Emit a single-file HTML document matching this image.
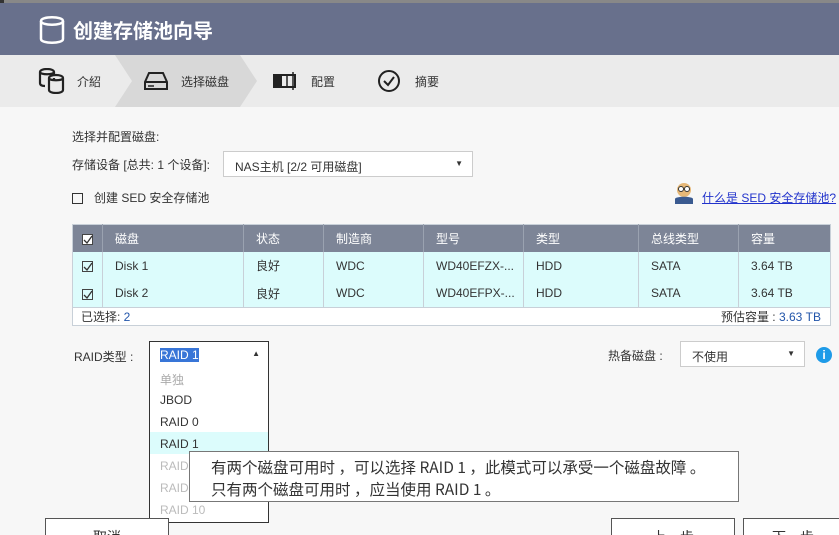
<!DOCTYPE html><html><head><meta charset="utf-8"><style>
*{margin:0;padding:0;box-sizing:border-box}
html,body{width:839px;height:535px;overflow:hidden}
body{background:#f7f7f7;font-family:"Liberation Sans","Noto Sans CJK SC",sans-serif;font-size:12px;color:#333;position:relative}
.a{position:absolute}
.hdr{left:0;top:3px;width:839px;height:52px;background:#68708c;color:#fff;font-size:20px;font-weight:bold}
.steps{left:0;top:55px;width:839px;height:52px;background:#ebebeb}
td,th{border-right:1px solid #c8d0d8;height:28px;text-align:left;padding-left:12px;font-weight:normal}
th{color:#fff;height:27px}
.cb{display:inline-block;width:11px;height:11px;border:1px solid #444;position:relative;vertical-align:middle}
.btn{background:#fff;border:1px solid #555;height:30px;text-align:center;font-size:14px;padding-top:8px}
</style></head><body>
<div class="a" style="left:0;top:0;width:839px;height:3px;background:#888"></div>
<div class="a" style="left:0;top:0;width:4px;height:55px;background:#333"></div>
<div class="a hdr">
<svg class="a" style="left:39px;top:12px" width="26" height="30" viewBox="0 0 26 30"><path d="M2 6c0-5 22-5 22 0v18c0 5-22 5-22 0z" fill="none" stroke="#fff" stroke-width="2.5"/><path d="M2 6c0 5 22 5 22 0" fill="none" stroke="#fff" stroke-width="2.5"/></svg>
<span class="a" style="left:73px;top:12px">创建存储池向导</span></div>
<div class="a steps">
<svg class="a" style="left:0;top:0" width="839" height="52"><polygon points="115,0 240,0 257,26 240,52 115,52 132,26" fill="#d8d8d8"/></svg>
<svg class="a" style="left:38px;top:13px" width="28" height="26" viewBox="0 0 28 26"><path d="M2 4c0-4 14-4 14 0v12c0 2-3 3-5 3" fill="none" stroke="#222" stroke-width="2.2"/><path d="M2 4c0 3 14 3 14 0M2 4v11c0 2 2 3 5 3" fill="none" stroke="#222" stroke-width="2.2"/><path d="M11 10c0-4 14-4 14 0v12c0 4-14 4-14 0z M11 10c0 3 14 3 14 0" fill="#ebebeb" stroke="#222" stroke-width="2.2"/></svg>
<span class="a" style="left:77px;top:18px">介紹</span>
<svg class="a" style="left:144px;top:16px" width="24" height="20" viewBox="0 0 24 20"><path d="M5 2h14l4 9v7H1v-7z" fill="none" stroke="#222" stroke-width="2"/><path d="M1 11h22" stroke="#222" stroke-width="2"/><path d="M4 15h6" stroke="#222" stroke-width="1.5"/></svg>
<span class="a" style="left:181px;top:18px">选择磁盘</span>
<svg class="a" style="left:273px;top:17px" width="26" height="18"><rect x="1" y="3" width="21" height="12" fill="none" stroke="#222" stroke-width="2"/><rect x="1" y="3" width="8" height="12" fill="#222"/><path d="M14 3v12M20 0v18" stroke="#222" stroke-width="1.5"/></svg>
<span class="a" style="left:311px;top:18px">配置</span>
<svg class="a" style="left:377px;top:14px" width="24" height="24"><circle cx="12" cy="12" r="10" fill="none" stroke="#222" stroke-width="2"/><path d="M7 12l4 4 6-8" fill="none" stroke="#222" stroke-width="2"/></svg>
<span class="a" style="left:415px;top:18px">摘要</span>
</div>
<div class="a" style="left:72px;top:128px">选择并配置磁盘:</div>
<div class="a" style="left:72px;top:156px">存储设备 [总共: 1 个设备]:</div>
<div class="a" style="left:223px;top:151px;width:250px;height:26px;background:#fff;border:1px solid #ccc;padding:6px 0 0 11px">NAS主机 [2/2 可用磁盘]<span class="a" style="right:9px;top:7px;font-size:8px">▼</span></div>
<span class="a cb" style="left:72px;top:191px;border-color:#333"></span>
<div class="a" style="left:94px;top:189px">创建 SED 安全存储池</div>
<svg class="a" style="left:672px;top:182px" width="24" height="22"><circle cx="12" cy="8" r="7" fill="#e6b878"/><circle cx="9" cy="7" r="2.5" fill="#fff" stroke="#333"/><circle cx="15" cy="7" r="2.5" fill="#fff" stroke="#333"/><path d="M3 22v-5c0-3 18-3 18 0v5z" fill="#3a5a90"/></svg>
<div class="a" style="left:702px;top:189px;color:#2233cc;text-decoration:underline">什么是 SED 安全存储池?</div>
<table class="a" style="left:72px;top:224px;width:759px;border-collapse:collapse;border:1px solid #c8d0d8">
<tr style="background:#7d8597"><th style="width:30px;padding-left:9px;border-color:#9aa2b0"><span class="cb" style="background:#fff"><svg class="a" style="left:0;top:0" width="10" height="10"><path d="M1 5l3 3 5-7" fill="none" stroke="#333" stroke-width="1.3"/></svg></span></th><th style="width:141px;border-color:#9aa2b0">磁盘</th><th style="width:80px;border-color:#9aa2b0">状态</th><th style="width:100px;border-color:#9aa2b0">制造商</th><th style="width:100px;border-color:#9aa2b0">型号</th><th style="width:115px;border-color:#9aa2b0">类型</th><th style="width:100px;border-color:#9aa2b0">总线类型</th><th style="border:0">容量</th></tr>
<tr style="background:#dcfcfc"><td style="padding-left:9px"><span class="cb"><svg class="a" style="left:0;top:0" width="10" height="10"><path d="M1 5l3 3 5-7" fill="none" stroke="#333" stroke-width="1.3"/></svg></span></td><td>Disk 1</td><td>良好</td><td>WDC</td><td>WD40EFZX-...</td><td>HDD</td><td>SATA</td><td>3.64 TB</td></tr>
<tr style="background:#dcfcfc"><td style="padding-left:9px"><span class="cb"><svg class="a" style="left:0;top:0" width="10" height="10"><path d="M1 5l3 3 5-7" fill="none" stroke="#333" stroke-width="1.3"/></svg></span></td><td>Disk 2</td><td>良好</td><td>WDC</td><td>WD40EFPX-...</td><td>HDD</td><td>SATA</td><td>3.64 TB</td></tr>
<tr style="background:#fff;border-top:1px solid #c8d0d8"><td colspan="8" style="height:18px;padding-left:8px;border:0">已选择: <span style="color:#2255aa">2</span><span style="float:right;padding-right:9px">预估容量 : <span style="color:#2255aa">3.63 TB</span></span></td></tr>
</table>
<div class="a" style="left:74px;top:348px">RAID类型 :</div>
<div class="a" style="left:149px;top:341px;width:120px;height:26px;background:#fff;border:1px solid #333;padding:6px 0 0 10px"><span style="background:#3875d7;color:#fff">RAID 1</span><span class="a" style="right:8px;top:7px;font-size:8px">▲</span></div>
<div class="a" style="left:149px;top:366px;width:120px;height:157px;background:#fff;border:1px solid #333;border-top:0">
<div style="height:22px;padding:5px 10px;color:#aaa">单独</div>
<div style="height:22px;padding:5px 10px">JBOD</div>
<div style="height:22px;padding:5px 10px">RAID 0</div>
<div style="height:22px;padding:5px 10px;background:#dcfcfc">RAID 1</div>
<div style="height:22px;padding:5px 10px;color:#bbb">RAID 5</div>
<div style="height:22px;padding:5px 10px;color:#bbb">RAID 6</div>
<div style="height:22px;padding:5px 10px;color:#bbb">RAID 10</div></div>
<div class="a" style="left:189px;top:451px;width:550px;height:51px;background:#fff;border:1px solid #777;padding:4px 0 0 21px;font-size:15.5px;line-height:22px;white-space:nowrap;font-family:'Noto Sans CJK SC','Liberation Sans',sans-serif">有两个磁盘可用时 ，可以选择 RAID 1 ，此模式可以承受一个磁盘故障 。<br>只有两个磁盘可用时 ，应当使用 RAID 1 。</div>
<div class="a" style="left:608px;top:347px">热备磁盘 :</div>
<div class="a" style="left:680px;top:341px;width:125px;height:26px;background:#fff;border:1px solid #ccc;padding:6px 0 0 11px">不使用<span class="a" style="right:9px;top:7px;font-size:8px">▼</span></div>
<div class="a" style="left:816px;top:347px;width:16px;height:16px;border-radius:50%;background:#1e9be8;color:#fff;font-weight:bold;text-align:center;font-size:12px;line-height:16px">i</div>
<div class="a btn" style="left:45px;top:518px;width:124px">取消</div>
<div class="a btn" style="left:611px;top:518px;width:124px">上一步</div>
<div class="a btn" style="left:743px;top:518px;width:100px">下一步</div>
</body></html>
